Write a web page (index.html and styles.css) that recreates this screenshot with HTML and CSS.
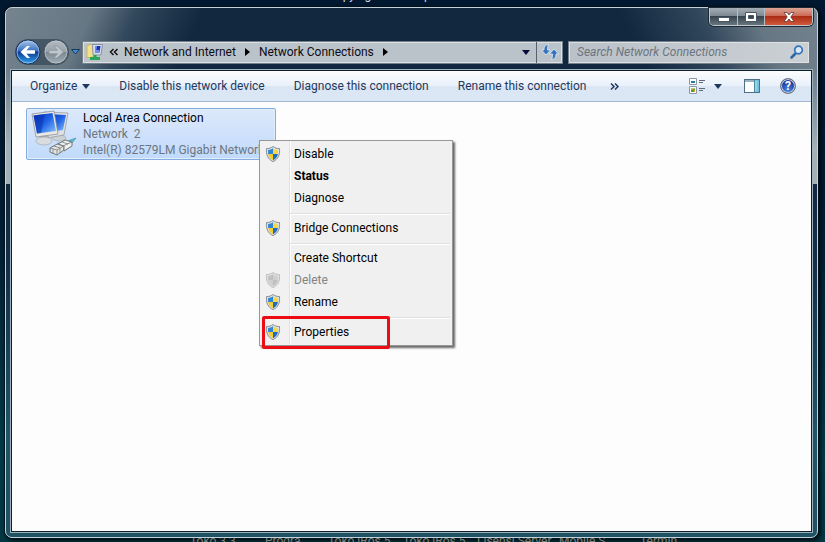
FILE: index.html
```html
<!DOCTYPE html>
<html lang="en">
<head>
    <meta charset="UTF-8">
    <meta name="viewport" content="width=device-width, initial-scale=1.0">
    <title>Network Connections</title>
    <link rel="stylesheet" href="styles.css">
</head>
<body>
    <svg class="defs" aria-hidden="true">
        <defs>
            <linearGradient id="blueBall" x1="0" y1="0" x2="0" y2="1">
                <stop offset="0" stop-color="#a9c8ea"/>
                <stop offset="0.45" stop-color="#3b6fc0"/>
                <stop offset="0.5" stop-color="#0d3b96"/>
                <stop offset="1" stop-color="#2fa5ee"/>
            </linearGradient>
            <linearGradient id="greyBall" x1="0" y1="0" x2="0" y2="1">
                <stop offset="0" stop-color="#b4bcc2"/>
                <stop offset="0.48" stop-color="#98a2aa"/>
                <stop offset="0.52" stop-color="#7c8993"/>
                <stop offset="1" stop-color="#a3aeb6"/>
            </linearGradient>
            <linearGradient id="screen" x1="0" y1="0" x2="1" y2="1">
                <stop offset="0" stop-color="#0a32c0"/>
                <stop offset="0.5" stop-color="#1f63e6"/>
                <stop offset="1" stop-color="#8cc4fb"/>
            </linearGradient>
            <symbol id="shield" viewBox="0 0 16 16">
                <path d="M8 0.5C6 2 4 2.6 1.5 2.6C1 8.5 2.5 13 8 15.6C13.5 13 15 8.5 14.5 2.6C12 2.6 10 2 8 0.5Z" fill="#dfe3e6" stroke="#858c92"/>
                <path d="M8 2.3C6.5 3.4 5 3.9 3.1 4V8H8Z" fill="#2f86d6"/>
                <path d="M8 2.3C9.5 3.4 11 3.9 12.9 4V8H8Z" fill="#f7d84a"/>
                <path d="M3.1 8C3.6 10.8 5 12.7 8 14.2V8Z" fill="#f2cb35"/>
                <path d="M12.9 8C12.4 10.8 11 12.7 8 14.2V8Z" fill="#1f6dbd"/>
            </symbol>
            <symbol id="shieldOff" viewBox="0 0 16 16">
                <path d="M8 0.5C6 2 4 2.6 1.5 2.6C1 8.5 2.5 13 8 15.6C13.5 13 15 8.5 14.5 2.6C12 2.6 10 2 8 0.5Z" fill="#e3e3e3" stroke="#bdbdbd"/>
                <path d="M8 2.3C6.5 3.4 5 3.9 3.1 4V8H8ZM12.9 8C12.4 10.8 11 12.7 8 14.2V8Z" fill="#c0c0c0"/>
                <path d="M8 2.3C9.5 3.4 11 3.9 12.9 4V8H8ZM3.1 8C3.6 10.8 5 12.7 8 14.2V8Z" fill="#cfcfcf"/>
            </symbol>
        </defs>
    </svg>

    <div class="desktop-top"><span>Copying to desktop</span></div>

    <main class="window">
        <header class="titlebar">
            <div class="caption">
                <button class="cap min" aria-label="Minimize">
                    <svg width="12" height="5" viewBox="0 0 12 5"><rect x="0.5" y="0.5" width="11" height="4" fill="#fff" stroke="#4b5661"/></svg>
                </button>
                <button class="cap max" aria-label="Maximize">
                    <svg width="12" height="10" viewBox="0 0 12 10"><path d="M0.5 0.5H11.5V9.5H0.5Z M3.5 3.5V6.5H8.5V3.5Z" fill="#fff" fill-rule="evenodd" stroke="#4b5661"/></svg>
                </button>
                <button class="cap close" aria-label="Close">
                    <svg width="12" height="10" viewBox="0 0 12 10"><path d="M1 0.5H4L6 3L8 0.5H11L7.8 5L11 9.5H8L6 7L4 9.5H1L4.2 5Z" fill="#fff" stroke="#5b3a3a" stroke-width="0.8"/></svg>
                </button>
            </div>
        </header>

        <nav class="navbar">
            <div class="travel">
                <button class="ball" aria-label="Back">
                    <svg width="26" height="26" viewBox="0 0 26 26">
                        <circle cx="13" cy="13" r="12" fill="url(#blueBall)" stroke="#173060"/>
                        <circle cx="13" cy="13" r="11" fill="none" stroke="#b4cdea" stroke-opacity="0.7"/>
                        <path d="M5.5 13L12 7H15L11.5 11.3H20V14.7H11.5L15 19H12Z" fill="#fff"/>
                    </svg>
                </button>
                <button class="ball" aria-label="Forward">
                    <svg width="26" height="26" viewBox="0 0 26 26">
                        <circle cx="13" cy="13" r="12" fill="url(#greyBall)" stroke="#43525e"/>
                        <circle cx="13" cy="13" r="11" fill="none" stroke="#c3cbd1" stroke-opacity="0.7"/>
                        <path d="M20.5 13L14 7H11L14.5 11.3H6V14.7H14.5L11 19H14Z" fill="#c0c7cc" stroke="#7f8b95" stroke-width="0.6"/>
                    </svg>
                </button>
            </div>
            <button class="recent" aria-label="Recent pages">
                <svg width="9" height="6" viewBox="0 0 9 6"><path d="M0.5 0.5H8.5L4.5 5Z" fill="#3f8fd4" stroke="#123a60"/></svg>
            </button>
            <div class="address">
                <div class="path">
                    <svg width="18" height="18" viewBox="0 0 18 18">
                        <path d="M1 3L4 1.5H9V13L5 14.5H1Z" fill="#f3e08a" stroke="#d0b85a"/>
                        <path d="M6.5 1.5H16.5L15 12H7Z" fill="#d8dde8" stroke="#8490a8"/>
                        <path d="M9 3H14.5L13.5 9.5H9Z" fill="#1c2fb4"/>
                        <path d="M9 3H11L10.5 7H13.5L13.3 9.5H9Z" fill="#6f8fe8"/>
                        <path d="M7.5 12H10.5V14H14V17H4V14H7.5Z" fill="#2ba45c"/>
                    </svg>
                    <svg class="chev" width="10" height="8" viewBox="0 0 10 8"><path d="M4.5 1L1.5 4L4.5 7M8.5 1L5.5 4L8.5 7" fill="none" stroke="#111" stroke-width="1.5"/></svg>
                    <a href="#">Network and Internet</a>
                    <svg width="5" height="8" viewBox="0 0 5 8"><path d="M0 0L5 4L0 8Z" fill="#000"/></svg>
                    <a href="#">Network Connections</a>
                    <svg width="5" height="8" viewBox="0 0 5 8"><path d="M0 0L5 4L0 8Z" fill="#000"/></svg>
                    <button class="drop" aria-label="Previous locations">
                        <svg width="8" height="5" viewBox="0 0 8 5"><path d="M0 0H8L4 5Z" fill="#0a0a38"/></svg>
                    </button>
                </div>
                <button class="refresh" aria-label="Refresh">
                    <svg width="18" height="16" viewBox="0 0 18 16">
                        <path d="M7.5 0.5C3.5 1 3 3.5 3 6H0.5L5 11L9.5 6H6.5C6.5 4 6.5 2.5 7.5 0.5Z" fill="#3474bd" stroke="#e6eef6" stroke-width="0.8"/>
                        <path d="M10.5 15.5C14.5 15 15 12.5 15 10H17.5L13 5L8.5 10H11.5C11.5 12 11.5 13.5 10.5 15.5Z" fill="#3474bd" stroke="#e6eef6" stroke-width="0.8"/>
                    </svg>
                </button>
            </div>
            <form class="search">
                <input type="search" aria-label="Search Network Connections" placeholder="Search Network Connections">
                <button type="button" aria-label="Search">
                    <svg width="14" height="14" viewBox="0 0 14 14">
                        <path d="M6 8L1.5 12.5" stroke="#2f66a6" stroke-width="2.5" stroke-linecap="round"/>
                        <circle cx="8.5" cy="5" r="3.8" fill="#dce8f4" stroke="#3375bd" stroke-width="1.7"/>
                    </svg>
                </button>
            </form>
        </nav>

        <section class="client">
            <div class="toolbar">
                <button>Organize <svg width="8" height="5" viewBox="0 0 8 5"><path d="M0 0H8L4 5Z" fill="#1e395b"/></svg></button>
                <button>Disable this network device</button>
                <button>Diagnose this connection</button>
                <button>Rename this connection</button>
                <button class="more" aria-label="More commands">
                    <svg width="9" height="7" viewBox="0 0 9 7"><path d="M1 0.5L4 3.5L1 6.5M5 0.5L8 3.5L5 6.5" fill="none" stroke="#1e395b" stroke-width="1.5"/></svg>
                </button>
                <div class="tools">
                    <button aria-label="Change your view">
                        <svg width="16" height="16" viewBox="0 0 16 16">
                            <path d="M0.5 0.5H7.5V6.5H0.5ZM0.5 8.5H7.5V15.5H0.5Z" fill="#fff" stroke="#8c98a5"/>
                            <path d="M2 3H6V5H2Z" fill="#257ca4"/>
                            <path d="M2 10.5H6V14H2Z" fill="#4da135"/>
                            <path d="M2 10.5H4V12H2ZM5 12H6V14H5Z" fill="#d9a52b"/>
                            <path d="M10 2.5H16M10 4.5H14M10 10.5H16M10 12.5H14" stroke="#5c6a79"/>
                        </svg>
                    </button>
                    <button class="view-drop" aria-label="More view options">
                        <svg width="8" height="5" viewBox="0 0 8 5"><path d="M0 0H8L4 5Z" fill="#1e395b"/></svg>
                    </button>
                    <button class="pane" aria-label="Show the preview pane">
                        <svg width="16" height="14" viewBox="0 0 16 14">
                            <rect x="0.5" y="0.5" width="15" height="13" fill="#fff" stroke="#4b7088"/>
                            <path d="M1 2H10" stroke="#9ab1c0" stroke-width="2"/>
                            <rect x="10" y="1" width="5" height="12" fill="#74c3dc"/>
                            <path d="M10.5 1V13" stroke="#4b8ba6"/>
                            <path d="M12 2V12" stroke="#b5e4ef"/>
                        </svg>
                    </button>
                    <button aria-label="Get help" class="help"><span>?</span></button>
                </div>
            </div>

            <div class="content">
                <button class="connection">
                    <svg width="50" height="48" viewBox="0 0 50 48">
                        <ellipse cx="31" cy="28" rx="7" ry="3" fill="#cdd1d4" stroke="#a0a7ad" stroke-width="0.6"/>
                        <path d="M16 2L40 3L36 25L19 28Z" fill="#dfe1e2" stroke="#8b9298" stroke-width="0.7"/>
                        <path d="M20 4L38 5L35 20L22 22Z" fill="url(#screen)"/>
                        <path d="M12 26H21V33H12Z" fill="#aeb4b9"/>
                        <ellipse cx="16" cy="31" rx="8" ry="4" fill="#dadddf" stroke="#9ba2a8" stroke-width="0.6"/>
                        <path d="M4 4L26 1L30 24L8 27Z" fill="#e8e8e6" stroke="#8b9298" stroke-width="0.8"/>
                        <path d="M5.5 5.5L24.5 3L28 21L9 23.5Z" fill="url(#screen)"/>
                        <path d="M5.5 5.5L17 4L13 23L9 23.5Z" fill="#052aa0" opacity="0.45"/>
                        <path d="M38 33L42 30L48 28L44 33L39 36Z" fill="#5bbccc" stroke="#3692a6" stroke-width="0.6"/>
                        <path d="M22 38L31 33L36 35V40L29 45L22 42Z" fill="#e5e5e2" stroke="#6f767b"/>
                        <path d="M30 34L37 30L44 32V36L36 41V36Z" fill="#f0f0ee" stroke="#6f767b"/>
                        <path d="M22 38L29 40V45M29 40L37 35L44 32M25 39V44M32 38V43M26 36L32 38M29 34L35 36M34 32L40 34" fill="none" stroke="#81888c" stroke-width="0.9"/>
                    </svg>
                    <span class="info">
                        <span class="name">Local Area Connection</span>
                        <span>Network&nbsp; 2</span>
                        <span>Intel(R) 82579LM Gigabit Network</span>
                    </span>
                </button>
            </div>
        </section>
    </main>

    <div class="desktop-bottom">
        <span>Toko 3 3</span>
        <span>Progra</span>
        <span>Toko iRos 5</span>
        <span>Toko iRos 5</span>
        <span>Lisensi Server</span>
        <span>Mobile S</span>
        <span>Termin</span>
    </div>

    <div class="menu" role="menu">
        <button role="menuitem"><svg><use href="#shield"/></svg>Disable</button>
        <button role="menuitem" class="default">Status</button>
        <button role="menuitem">Diagnose</button>
        <hr>
        <button role="menuitem"><svg><use href="#shield"/></svg>Bridge Connections</button>
        <hr>
        <button role="menuitem">Create Shortcut</button>
        <button role="menuitem" disabled><svg><use href="#shieldOff"/></svg>Delete</button>
        <button role="menuitem"><svg><use href="#shield"/></svg>Rename</button>
        <hr>
        <button role="menuitem"><svg><use href="#shield"/></svg>Properties</button>
        <div class="marker"></div>
    </div>
</body>
</html>
```

FILE: styles.css
```css
*{
    margin: 0;
    padding: 0;
    box-sizing: border-box;
}
body{
    min-height: 100vh;
    display: flex;
    flex-direction: column;
    position: relative;
    overflow: hidden;
    background: linear-gradient(#001830, #001a30 35%, #003a48 85%, #023642);
    font-family: Roboto, "Open Sans", sans-serif;
    font-size: 12px;
    line-height: 16px;
}
button{
    border: none;
    background: none;
    font: inherit;
    color: inherit;
    display: flex;
    align-items: center;
    white-space: nowrap;
}
svg{
    display: block;
    flex-shrink: 0;
}
.defs{
    position: absolute;
    width: 0;
    height: 0;
}

/* desktop showing round the window */
.desktop-top{
    height: 7px;
    overflow: hidden;
    display: flex;
    align-items: flex-end;
    padding: 0 0 4px 328px;
    color: #d5dde4;
}
.desktop-bottom{
    height: 4px;
    overflow: hidden;
    display: grid;
    grid-template-columns: 75px 63px 75px 74px 82px 81px 1fr;
    padding-left: 190px;
    line-height: 6px;
    color: #7d8279;
}

/* window frame */
.window{
    flex: 1;
    display: flex;
    flex-direction: column;
    margin: 0 7px 0 5px;
    padding: 0 4px 4px;
    border: 1px solid #c3d2da;
    border-radius: 7px;
    box-shadow: 0 0 0 1px #00101c, 2px 2px 5px #000;
    background:
        linear-gradient(transparent 60px, #a5b0b7 140px) left top / 5px 176px no-repeat,
        linear-gradient(transparent 60px, #a5b0b7 140px) right top / 5px 176px no-repeat,
        linear-gradient(115deg, #75848f 0, #667783 80px, rgba(70, 92, 110, 0.6) 120px, transparent 180px) left top / 50% 176px no-repeat,
        linear-gradient(245deg, #75848f 0, #667783 60px, rgba(70, 92, 110, 0.6) 110px, transparent 180px) right top / 50% 176px no-repeat,
        linear-gradient(#12283f 0, #12283f 176px, #143149 50%, #1f5566 80%, #1f5263);
}
.titlebar{
    height: 31px;
    display: flex;
    justify-content: flex-end;
}
.caption{
    display: flex;
    height: 18px;
    border: 1px solid #c0c8ce;
    border-top: none;
    border-radius: 0 0 5px 5px;
    overflow: hidden;
    box-shadow: 0 0 0 1px #1d2a35;
}
.cap{
    justify-content: center;
    width: 28px;
    background: linear-gradient(#a5aeb6, #7d8993 45%, #36444f 50%, #67757f);
    border-right: 1px solid #b5bec5;
}
.min{
    padding-top: 5px;
}
.max{
    width: 27px;
}
.close{
    width: 47px;
    border: none;
    background: linear-gradient(#dda596, #cc6b57 45%, #ad2c15 50%, #cf5a3a);
}

/* back, forward, address and search */
.navbar{
    display: flex;
    align-items: center;
    height: 26px;
    margin-bottom: 4px;
    padding: 0 3px 0 5px;
}
.travel{
    display: flex;
    gap: 2px;
    border-radius: 13px;
    background: rgba(30, 48, 64, 0.5);
}
.recent{
    padding: 0 2px;
}
.address{
    flex: 1;
    display: flex;
    height: 23px;
    border: 1px solid #747f89;
    box-shadow: inset 0 0 0 1px #dce1e5;
    background: #bac2ca;
}
.path{
    flex: 1;
    display: flex;
    align-items: center;
    gap: 9px;
    padding: 0 6px 0 3px;
}
.path a{
    color: #0c0c14;
    text-decoration: none;
    white-space: nowrap;
}
.chev{
    margin: 0 -4px;
}
.drop{
    margin-left: auto;
}
.refresh{
    width: 26px;
    justify-content: center;
    border-left: 1px solid #55616c;
}
.search{
    flex: 0 1 242px;
    display: flex;
    align-items: center;
    height: 23px;
    margin-left: 5px;
    padding: 0 5px 0 8px;
    border: 1px solid #747f89;
    box-shadow: inset 0 0 0 1px #dce1e5;
    background: linear-gradient(90deg, #b9c0c8, #cbd0d4);
}
.search input{
    flex: 1;
    min-width: 0;
    border: none;
    background: none;
    outline: none;
    font: inherit;
}
.search input::placeholder{
    color: #6c757e;
    font-style: italic;
}

/* white part */
.client{
    flex: 1;
    display: flex;
    flex-direction: column;
    border: 1px solid #0d1e2c;
    outline: 1px solid #9cb1bd;
    margin: 1px;
    background-color: #fdfdfd;
}
.toolbar{
    display: flex;
    align-items: center;
    gap: 29px;
    height: 31px;
    padding: 0 15px 0 18px;
    color: #1e395b;
    background: linear-gradient(#fbfcfe, #eaf1fb 48%, #dbe6f5 52%, #dce7f6);
    border-bottom: 1px solid #a3b6d0;
}
.toolbar button{
    gap: 5px;
}
.toolbar .more{
    margin-left: -6px;
}
.tools{
    display: flex;
    align-items: center;
    margin-left: auto;
}
.view-drop{
    margin-left: 9px;
}
.pane{
    margin: 0 20px 0 22px;
}
.toolbar .help{
    justify-content: center;
    width: 16px;
    height: 16px;
    border: 1px solid #6d7683;
    border-radius: 50%;
    background: radial-gradient(circle at 50% 80%, #4a8be0, #1b3a9c 65%);
    box-shadow: inset 0 0 0 1px #c3cede;
    color: #fff;
    font-weight: bold;
}
.content{
    flex: 1;
    padding: 6px 14px;
}
.connection{
    width: 250px;
    height: 52px;
    gap: 5px;
    padding-left: 1px;
    border: 1px solid #84acdd;
    border-radius: 2px;
    box-shadow: inset 0 0 0 1px #e2edfb;
    background: linear-gradient(#dce9fb, #c1dafb);
    text-align: left;
    overflow: hidden;
}
.info{
    display: flex;
    flex-direction: column;
    color: #6d7680;
}
.name{
    color: #000;
}

/* context menu */
.menu{
    position: absolute;
    left: 259px;
    top: 140px;
    width: 194px;
    padding: 2px;
    border: 1px solid #979797;
    box-shadow: 2px 2px 2px rgba(0, 0, 0, 0.6);
    background: linear-gradient(90deg, #f1f1f1 29px, #e0e0e0 29px, #e0e0e0 30px, #fff 30px, #fff 31px, #f0f0f0 31px);
}
.menu button{
    position: relative;
    width: 100%;
    height: 22px;
    padding-left: 32px;
    color: #000;
}
.menu button:disabled{
    color: #838383;
}
.menu svg{
    position: absolute;
    left: 3px;
    top: 3px;
    width: 16px;
    height: 16px;
}
.menu .default{
    font-weight: bold;
}
.menu hr{
    height: 2px;
    margin: 4px 0 2px 28px;
    border: none;
    border-top: 1px solid #e0e0e0;
    background-color: #fff;
}
.marker{
    position: absolute;
    left: 2px;
    bottom: -4px;
    width: 128px;
    height: 33px;
    border: 3px solid #ec0c14;
    border-radius: 2px;
}
```
